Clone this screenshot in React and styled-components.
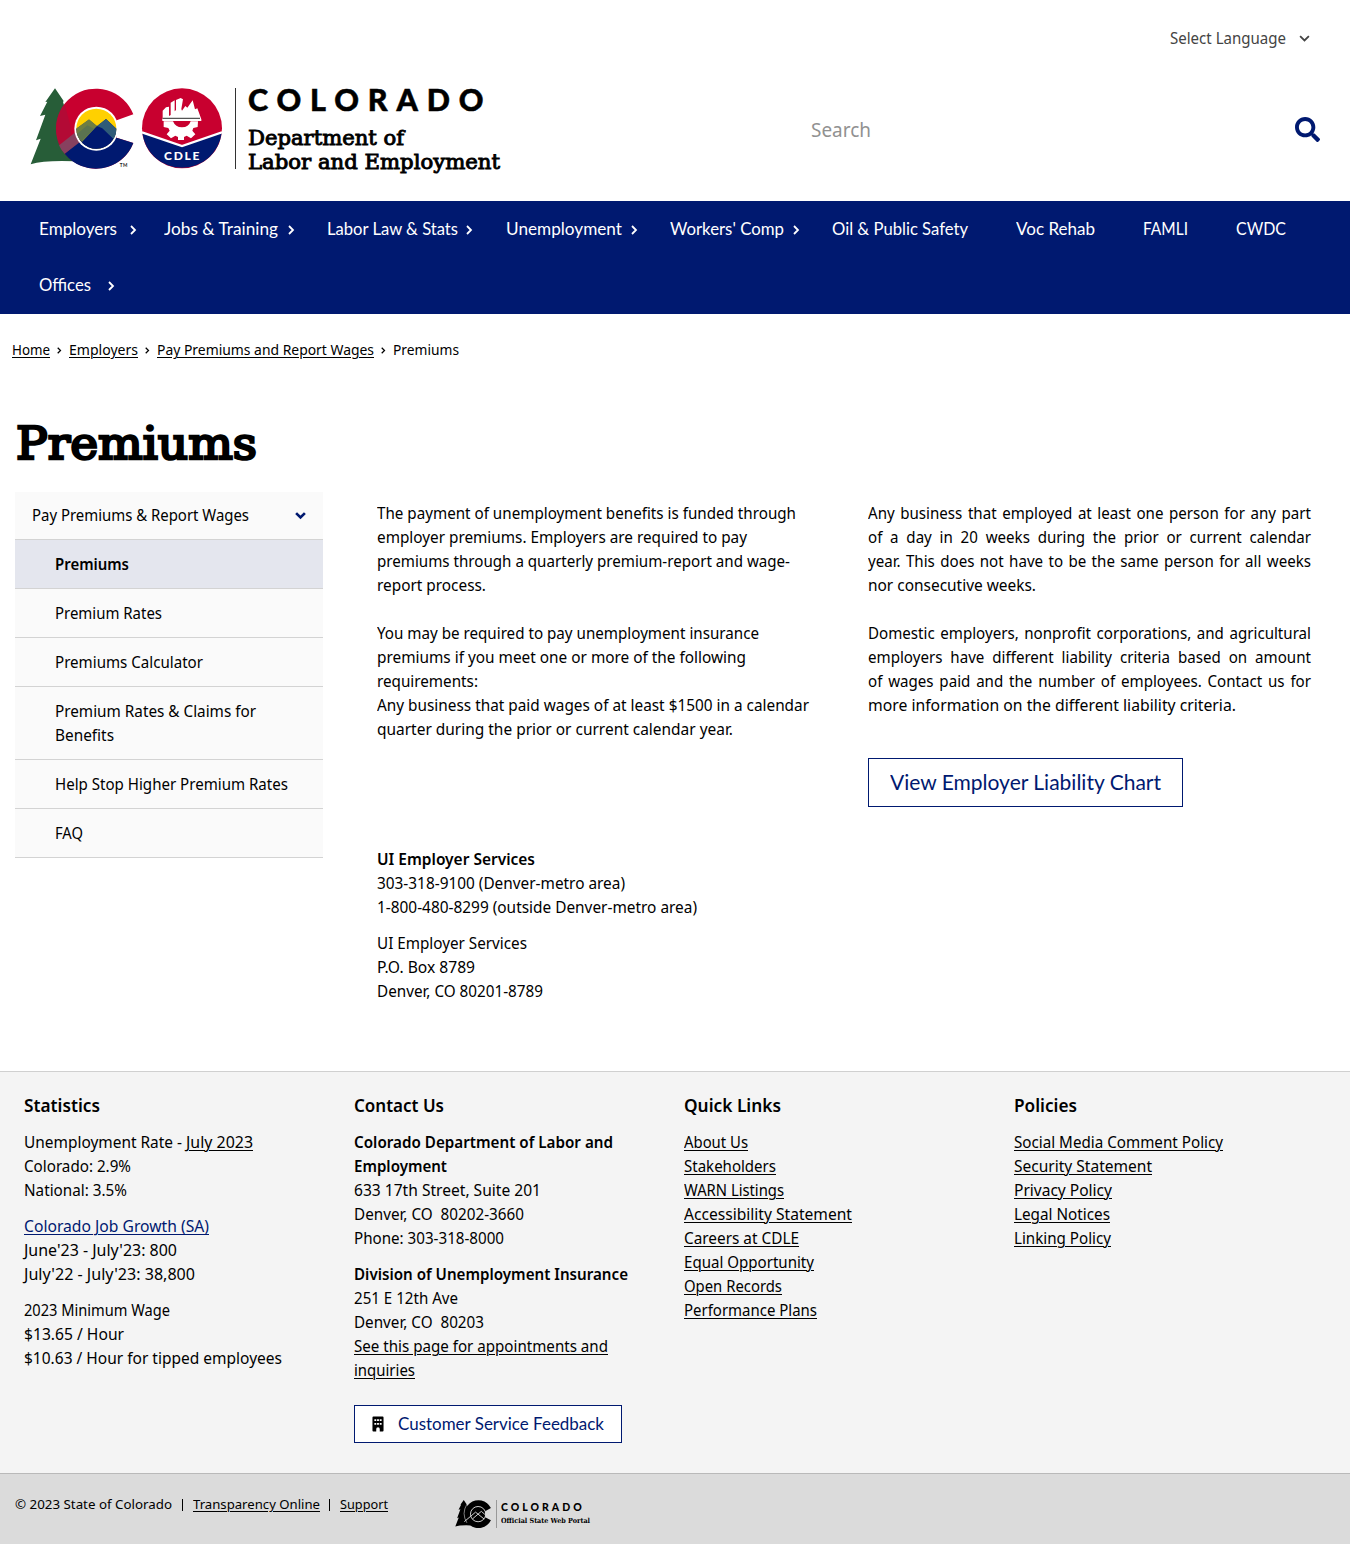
import React, { useLayoutEffect, useRef, useState } from "react";
import styled, { createGlobalStyle, css } from "styled-components";
import { FaSearch } from "react-icons/fa";

const BODY = `"Noto Sans", "Open Sans", sans-serif`;
const MUSEO = `Lato, "Open Sans", sans-serif`;
const SLAB = `"DejaVu Serif", "Liberation Serif", serif`;
const NAVY = "#001970";

const Global = createGlobalStyle`
  * { box-sizing: border-box; }
  body { margin: 0; background: #fff; color: #000; font: 15.5px/24px ${BODY}; }
  h1, h2, p, ul { margin: 0; padding: 0; font-weight: inherit; font-size: inherit; }
  ul { list-style: none; }
`;

/* Text set to a fixed measure, by glyph width or by tracking. */
const Measure = styled.span`
  display: inline-block;
  white-space: pre;
  flex: none;
  vertical-align: top;
`;
const Glyphs = styled.span`
  display: inline-block;
  transform-origin: 0 50%;
  text-decoration: ${(p) => (p.$link ? "underline" : "none")};
  text-decoration-thickness: 1px;
  text-underline-offset: 2px;
`;
function Fit({ w, track, link, children, className }) {
  const ref = useRef(null);
  const [style, setStyle] = useState({});
  useLayoutEffect(() => {
    const natural = ref.current.offsetWidth;
    if (!w || !natural) return;
    setStyle(
      track
        ? { letterSpacing: (w - natural) / (String(children).length - 1) }
        : { transform: `scaleX(${w / ref.current.getBoundingClientRect().width})` }
    );
  }, []);
  return (
    <Measure className={className} style={{ width: w }}>
      <Glyphs ref={ref} $link={link} style={style}>{children}</Glyphs>
    </Measure>
  );
}

const Page = styled.div`
  width: 1350px;
  height: 1544px;
  overflow: hidden;
  display: flex;
  flex-direction: column;
`;
const Header = styled.header`
  height: 201px;
  flex: none;
  padding: 26px 30px 0;
`;
const Language = styled.div`
  display: flex;
  align-items: center;
  justify-content: flex-end;
  gap: 13px;
  padding-right: 10px;
  color: #444;
  height: 24px;
  svg { margin-top: 2px; }
`;
const Brand = styled.div`
  display: flex;
  align-items: flex-start;
  padding-top: 37px;
  > svg { margin-top: 1px; }
`;
const BrandRule = styled.div`
  width: 1px;
  height: 81px;
  margin: 1px 12px 0 13px;
  background: #333;
`;
const BrandText = styled.div`
  display: flex;
  flex-direction: column;
  width: 563px;
`;
const StateName = styled.div`
  font: 900 30.5px/24px ${MUSEO};
  -webkit-text-stroke: 0.5px #000;
  height: 38px;
`;
const DeptName = styled.div`
  font: 20px/24px ${SLAB};
  -webkit-text-stroke: 0.9px #000;
  height: 24px;
  position: relative;
  top: 0.5px;
`;
const SearchBox = styled.div`
  display: flex;
  flex: 1;
  align-items: center;
  justify-content: space-between;
  height: 85px;
  color: #919191;
  font-size: 19.5px;
  span { line-height: 26px; }
  svg { color: ${NAVY}; }
`;
const Nav = styled.nav`
  flex: none;
  height: 113px;
  padding: 0 25px 0 39px;
  background: ${NAVY};
  display: flex;
  flex-wrap: wrap;
  align-content: flex-start;
`;
const NavItem = styled.a`
  width: ${(p) => p.$w}px;
  height: 56px;
  display: flex;
  align-items: center;
  gap: ${(p) => p.$gap}px;
  color: #fff;
  font: 16.3px/24px ${MUSEO};
  svg { margin-top: 2px; }
`;
const Crumbs = styled.div`
  height: 24px;
  margin: 24px 0 0 12px;
  display: flex;
  align-items: center;
  gap: 7.2px;
  font-size: 14.2px;
`;
const Title = styled.h1`
  margin: 54px 0 20px 16px;
  height: 56px;
  font: 45.5px/56px ${SLAB};
  -webkit-text-stroke: 2.6px #000;
`;
const Main = styled.main`
  display: flex;
  flex: none;
  padding-left: 15px;
  height: 579px;
`;
const Side = styled.ul`
  width: 308px;
  flex: none;
  margin-right: 53.5px;
`;
const SideItem = styled.li`
  padding: 12px 16px 12px 40px;
  background: #fafafa;
  border-bottom: 1px solid #d3d3d3;
  display: flex;
  flex-direction: column;
  ${(p) => p.$top && css`
    flex-direction: row;
    align-items: center;
    justify-content: space-between;
    padding: 11px 17px 12px 17px;
    svg { margin-top: 2px; }
  `}
  ${(p) => p.$active && css`
    background: #e4e6ee;
    font-weight: 600;
  `}
`;
const Column = styled.div`
  width: ${(p) => p.$w}px;
  margin-right: ${(p) => p.$gap || 0}px;
  padding-top: 9px;
  display: flex;
  flex-direction: column;
  align-items: flex-start;
`;
const Block = styled.div`
  display: flex;
  flex-direction: column;
  align-items: flex-start;
  margin-bottom: ${(p) => p.$mb || 0}px;
`;
const Bold = styled.div`
  height: 24px;
  font-weight: 600;
`;
const Row = styled.div`
  display: flex;
  height: 24px;
`;
const OutlineButton = styled.a`
  display: flex;
  align-items: center;
  justify-content: ${(p) => (p.$small ? "flex-start" : "center")};
  gap: 14px;
  padding: ${(p) => (p.$small ? "0 17px" : "0 0 2px")};
  width: ${(p) => (p.$small ? 268 : 315)}px;
  height: ${(p) => (p.$small ? 38 : 49)}px;
  margin-top: ${(p) => (p.$small ? 10.5 : 41)}px;
  background: #fff;
  border: 1px solid ${NAVY};
  color: ${NAVY};
  font: ${(p) => (p.$small ? 16.3 : 20.3)}px/24px ${MUSEO};
`;
const Footer = styled.footer`
  flex: none;
  height: 402px;
  padding: 21px 0 0 24px;
  background: #f4f4f4;
  border-top: 1px solid #d0d0d0;
  display: flex;
`;
const FootCol = styled.section`
  width: 330px;
  display: flex;
  flex-direction: column;
  align-items: flex-start;
`;
const FootTitle = styled.h2`
  height: 24px;
  margin-bottom: 13px;
  font-weight: 600;
  font-size: 17.5px;
`;
const Navy = styled.div`
  height: 24px;
  color: ${NAVY};
`;
const Bottom = styled.div`
  height: 71px;
  background: #dbdbdb;
  border-top: 1px solid #b9b9b9;
  padding: 18px 0 0 15px;
  display: flex;
  font-size: 13.3px;
`;
const Legal = styled.div`
  display: flex;
  gap: 8px;
  width: 440px;
`;
const Pipe = styled.span`
  width: 1px;
  height: 12px;
  margin: 7px 2px 0 1.5px;
  background: #000;
`;
const Portal = styled.div`
  display: flex;
  padding-top: 8px;
`;
const PortalText = styled.div`
  border-left: 1px solid #999;
  margin-left: 5px;
  padding-left: 4px;
  height: 28px;
`;
const PortalName = styled.div`
  font: 900 10.5px/14px ${MUSEO};
  height: 15px;
`;
const PortalSub = styled.div`
  font: bold 7px/12px ${SLAB};
  height: 12px;
`;

const Chevron = ({ down, size = 10, stroke = 2, color = "currentColor" }) => (
  <svg width={down ? size : size * 0.65} height={down ? size * 0.65 : size}
    viewBox={down ? "0 0 10 6.5" : "0 0 6.5 10"} fill="none" stroke={color} strokeWidth={stroke}>
    <path d={down ? "M1 1l4 4 4-4" : "M1 1l4 4-4 4"} />
  </svg>
);

const Building = () => (
  <svg width="13" height="16" viewBox="0 0 13 16">
    <path fillRule="evenodd" d="M1.5 0h10q1 0 1 1v14q0 1-1 1H8.4v-2.6a1.9 1.9 0 0 0-3.8 0V16H1.500q-1 0-1-1V1q0-1 1-1zM2.600 2.800v2h2v-2zM5.500 2.800v2h2v-2zM8.400 2.800v2h2v-2zM2.600 6.800v2h2v-2zM5.500 6.800v2h2v-2zM8.400 6.800v2h2v-2z" fill="#000" />
  </svg>
);

const StateLogo = () => (
  <svg width="192" height="82" viewBox="30 38 576 246">
    <path d="M105 39l26 38-2 3 22 70 14 108q-90-4-133 9l30-77-14 5 28-77-16 4 22-43-6 1z" fill="#275d38" />
    <path d="M340 117A120 120 0 1 0 340 203L290 187 290 135z" fill="#c8002f" />
    <path d="M134 235L176 199 290 187 340 203A120 120 0 0 1 134 235z" fill={NAVY} />
    <path d="M117 210l49-39 14 29-46 35q-11-11-17-25z" fill="#87415f" />
    <path d="M134 85l16 62 4 33-37 30q-24-72 17-125z" fill="#a3123a" opacity=".55" />
    <circle cx="229" cy="160" r="66" fill="#fff" />
    <circle cx="229" cy="160" r="60" fill="#ffd000" />
    <path d="M169 160l38-27 24 20 27-22 31 29a60 60 0 0 1-120 0z" fill={NAVY} />
    <path d="M170 159l37-27 24 20-45 48q-18-18-16-41z" fill="#6e7e43" />
    <path d="M231 152l27-21 31 29q1 17-8 32l-34-33z" fill="#2f5b78" />
    <path d="M172 175l30-25 20 10-38 37q-8-8-12-22z" fill="#5b7350" />
    <path d="M186 202l45-48 49 37q-16 29-51 29-25 0-43-18z" fill={NAVY} />
    <circle cx="486" cy="159" r="120" fill="#c8002f" />
    <path d="M367 173l119 40 119-40a120 120 0 0 1-238 0z" fill={NAVY} />
    <path d="M366 171l120 41 120-41" fill="none" stroke="#fff" strokeWidth="7" />
    <path d="M428 126v-20l10-10 9-2v28l5-3V82l12-7v33l4-4V74l14-6 7 4-5 29 2 5 10-14 6 5 16-22 7 27 7-3 12 33v5H428z" fill="#fff" />
    <path d="M428 127h112v4H428z" fill="#555" />
    <path d="M427 131h112v5H427z" fill="#fff" />
    <path d="M431 138h28q7 18 27 18t26-18h22l-1 17-13 3-3 8 9 11-13 12-13-8-8 4v9h-18v-9l-8-4-13 8-13-12 9-11-4-8-14-3z" fill="#fff" />
    <text x="432" y="254" textLength="106" fill="#fff" fontFamily="Lato" fontWeight="900" fontSize="36">CDLE</text>
    <text x="299" y="276" textLength="23" fill="#222" fontFamily="Lato" fontWeight="700" fontSize="14">TM</text>
  </svg>
);

const PortalLogo = () => (
  <svg width="36" height="28" viewBox="30 38 310 242">
    <path d="M105 39l26 38 20 40 14 141q-90-4-133 9l30-77-14 5 28-77-16 4 22-43-6 1z" />
    <path d="M340 107A120 120 0 1 0 340 213L290 187 290 135z" />
    <g fill="none" stroke="#dbdbdb" strokeWidth="8">
      <path d="M132 75q-48 80 0 160" strokeWidth="5" />
      <circle cx="229" cy="160" r="66" />
      <path d="M110 225l97-82 75 60M180 202l77-66 31 27" />
    </g>
  </svg>
);

const NAV = [
  ["Employers", 78, 125, 13], ["Jobs & Training", 114, 163, 10], ["Labor Law & Stats", 131, 179, 8],
  ["Unemployment", 116, 164, 9], ["Workers' Comp", 114, 162, 9], ["Oil & Public Safety", 136, 184],
  ["Voc Rehab", 79, 127], ["FAMLI", 45, 93], ["CWDC", 50, 50], ["Offices", 52, 125, 17],
];
const Lines = ({ rows, mb, link }) => (
  <Block $mb={mb}>{rows.map(([t, w]) => <Fit key={t} w={w} link={link}>{t}</Fit>)}</Block>
);

/* Lines of a justified paragraph; the last one is ragged. */
const JustLine = styled.div`
  width: 443px;
  height: 24px;
`;
const Stretch = styled.div`
  width: ${(p) => 443 / p.$s}px;
  transform: scaleX(${(p) => p.$s});
  transform-origin: 0 50%;
  white-space: nowrap;
  text-align-last: justify;
`;
const Justified = ({ rows, mb, last, lastW }) => (
  <Block $mb={mb}>
    {rows.map((t) => <JustLine key={t}><Stretch $s={0.975}>{t}</Stretch></JustLine>)}
    <Fit w={lastW}>{last}</Fit>
  </Block>
);

export default function App() {
  return (
    <Page>
      <Global />
      <Header>
        <Language><Fit w={116}>Select Language</Fit><Chevron down size={11} stroke={1.6} /></Language>
        <Brand>
          <StateLogo />
          <BrandRule />
          <BrandText>
            <StateName><Fit w={236} track>COLORADO</Fit></StateName>
            <DeptName><Fit w={156}>Department of</Fit></DeptName>
            <DeptName><Fit w={252}>Labor and Employment</Fit></DeptName>
          </BrandText>
          <SearchBox><Fit w={60}>Search</Fit><FaSearch size={25} /></SearchBox>
        </Brand>
      </Header>
      <Nav>
        {NAV.map(([t, w, full, gap]) => (
          <NavItem key={t} $w={full} $gap={gap}>
            <Fit w={w}>{t}</Fit>{gap && <Chevron size={10} stroke={1.8} />}
          </NavItem>
        ))}
      </Nav>
      <Crumbs>
        <Fit w={38} link>Home</Fit><Chevron size={7} stroke={1.8} />
        <Fit w={69} link>Employers</Fit><Chevron size={7} stroke={1.8} />
        <Fit w={217} link>Pay Premiums and Report Wages</Fit><Chevron size={7} stroke={1.8} />
        <Fit w={66}>Premiums</Fit>
      </Crumbs>
      <Title><Fit w={241}>Premiums</Fit></Title>
      <Main>
        <Side>
          <SideItem $top><Fit w={217}>Pay Premiums & Report Wages</Fit><Chevron down size={11} stroke={2.4} color={NAVY} /></SideItem>
          <SideItem $active><Fit w={74}>Premiums</Fit></SideItem>
          <SideItem><Fit w={107}>Premium Rates</Fit></SideItem>
          <SideItem><Fit w={148}>Premiums Calculator</Fit></SideItem>
          <SideItem><Fit w={201}>Premium Rates & Claims for</Fit><Fit w={59}>Benefits</Fit></SideItem>
          <SideItem><Fit w={233}>Help Stop Higher Premium Rates</Fit></SideItem>
          <SideItem><Fit w={28}>FAQ</Fit></SideItem>
        </Side>
        <Column $w={444} $gap={47.5}>
          <Lines mb={24} rows={[
            ["The payment of unemployment benefits is funded through", 419],
            ["employer premiums. Employers are required to pay", 370],
            ["premiums through a quarterly premium-report and wage-", 413],
            ["report process.", 109]]} />
          <Lines mb={106} rows={[
            ["You may be required to pay unemployment insurance", 382],
            ["premiums if you meet one or more of the following", 369],
            ["requirements:", 101],
            ["Any business that paid wages of at least $1500 in a calendar", 432],
            ["quarter during the prior or current calendar year.", 356]]} />
          <Bold><Fit w={158}>UI Employer Services</Fit></Bold>
          <Lines mb={12} rows={[["303-318-9100 (Denver-metro area)", 248], ["1-800-480-8299 (outside Denver-metro area)", 320]]} />
          <Lines rows={[["UI Employer Services", 150], ["P.O. Box 8789", 98], ["Denver, CO 80201-8789", 166]]} />
        </Column>
        <Column $w={443}>
          <Justified mb={24} last="nor consecutive weeks." lastW={168} rows={[
            "Any business that employed at least one person for any part",
            "of a day in 20 weeks during the prior or current calendar",
            "year. This does not have to be the same person for all weeks"]} />
          <Justified last="more information on the different liability criteria." lastW={368} rows={[
            "Domestic employers, nonprofit corporations, and agricultural",
            "employers have different liability criteria based on amount",
            "of wages paid and the number of employees. Contact us for"]} />
          <OutlineButton><Fit w={271}>View Employer Liability Chart</Fit></OutlineButton>
        </Column>
      </Main>
      <Footer>
        <FootCol>
          <FootTitle><Fit w={76}>Statistics</Fit></FootTitle>
          <Row><Fit w={162}>{"Unemployment Rate - "}</Fit><Fit w={67} link>July 2023</Fit></Row>
          <Lines mb={12} rows={[["Colorado: 2.9%", 107], ["National: 3.5%", 103]]} />
          <Navy><Fit w={185} link>Colorado Job Growth (SA)</Fit></Navy>
          <Lines mb={12} rows={[["June'23 - July'23: 800", 153], ["July'22 - July'23: 38,800", 171]]} />
          <Lines rows={[["2023 Minimum Wage", 146], ["$13.65 / Hour", 100], ["$10.63 / Hour for tipped employees", 258]]} />
        </FootCol>
        <FootCol>
          <FootTitle><Fit w={90}>Contact Us</Fit></FootTitle>
          <Bold><Fit w={259}>Colorado Department of Labor and</Fit></Bold>
          <Bold><Fit w={93}>Employment</Fit></Bold>
          <Lines mb={12} rows={[["633 17th Street, Suite 201", 187], ["Denver, CO  80202-3660", 170], ["Phone: 303-318-8000", 150]]} />
          <Bold><Fit w={274}>Division of Unemployment Insurance</Fit></Bold>
          <Lines rows={[["251 E 12th Ave", 104], ["Denver, CO  80203", 130]]} />
          <Lines mb={12} link rows={[["See this page for appointments and", 254], ["inquiries", 61]]} />
          <OutlineButton $small><Building /><Fit w={206}>Customer Service Feedback</Fit></OutlineButton>
        </FootCol>
        <FootCol>
          <FootTitle><Fit w={97}>Quick Links</Fit></FootTitle>
          <Lines link rows={[["About Us", 64], ["Stakeholders", 92], ["WARN Listings", 100], ["Accessibility Statement", 168],
            ["Careers at CDLE", 115], ["Equal Opportunity", 130], ["Open Records", 98], ["Performance Plans", 133]]} />
        </FootCol>
        <FootCol>
          <FootTitle><Fit w={63}>Policies</Fit></FootTitle>
          <Lines link rows={[["Social Media Comment Policy", 209], ["Security Statement", 138], ["Privacy Policy", 98],
            ["Legal Notices", 96], ["Linking Policy", 97]]} />
        </FootCol>
      </Footer>
      <Bottom>
        <Legal>
          <Fit w={157}>© 2023 State of Colorado</Fit><Pipe />
          <Fit w={127} link>Transparency Online</Fit><Pipe />
          <Fit w={48} link>Support</Fit>
        </Legal>
        <Portal>
          <PortalLogo />
          <PortalText>
            <PortalName><Fit w={81} track>COLORADO</Fit></PortalName>
            <PortalSub><Fit w={89}>Official State Web Portal</Fit></PortalSub>
          </PortalText>
        </Portal>
      </Bottom>
    </Page>
  );
}
